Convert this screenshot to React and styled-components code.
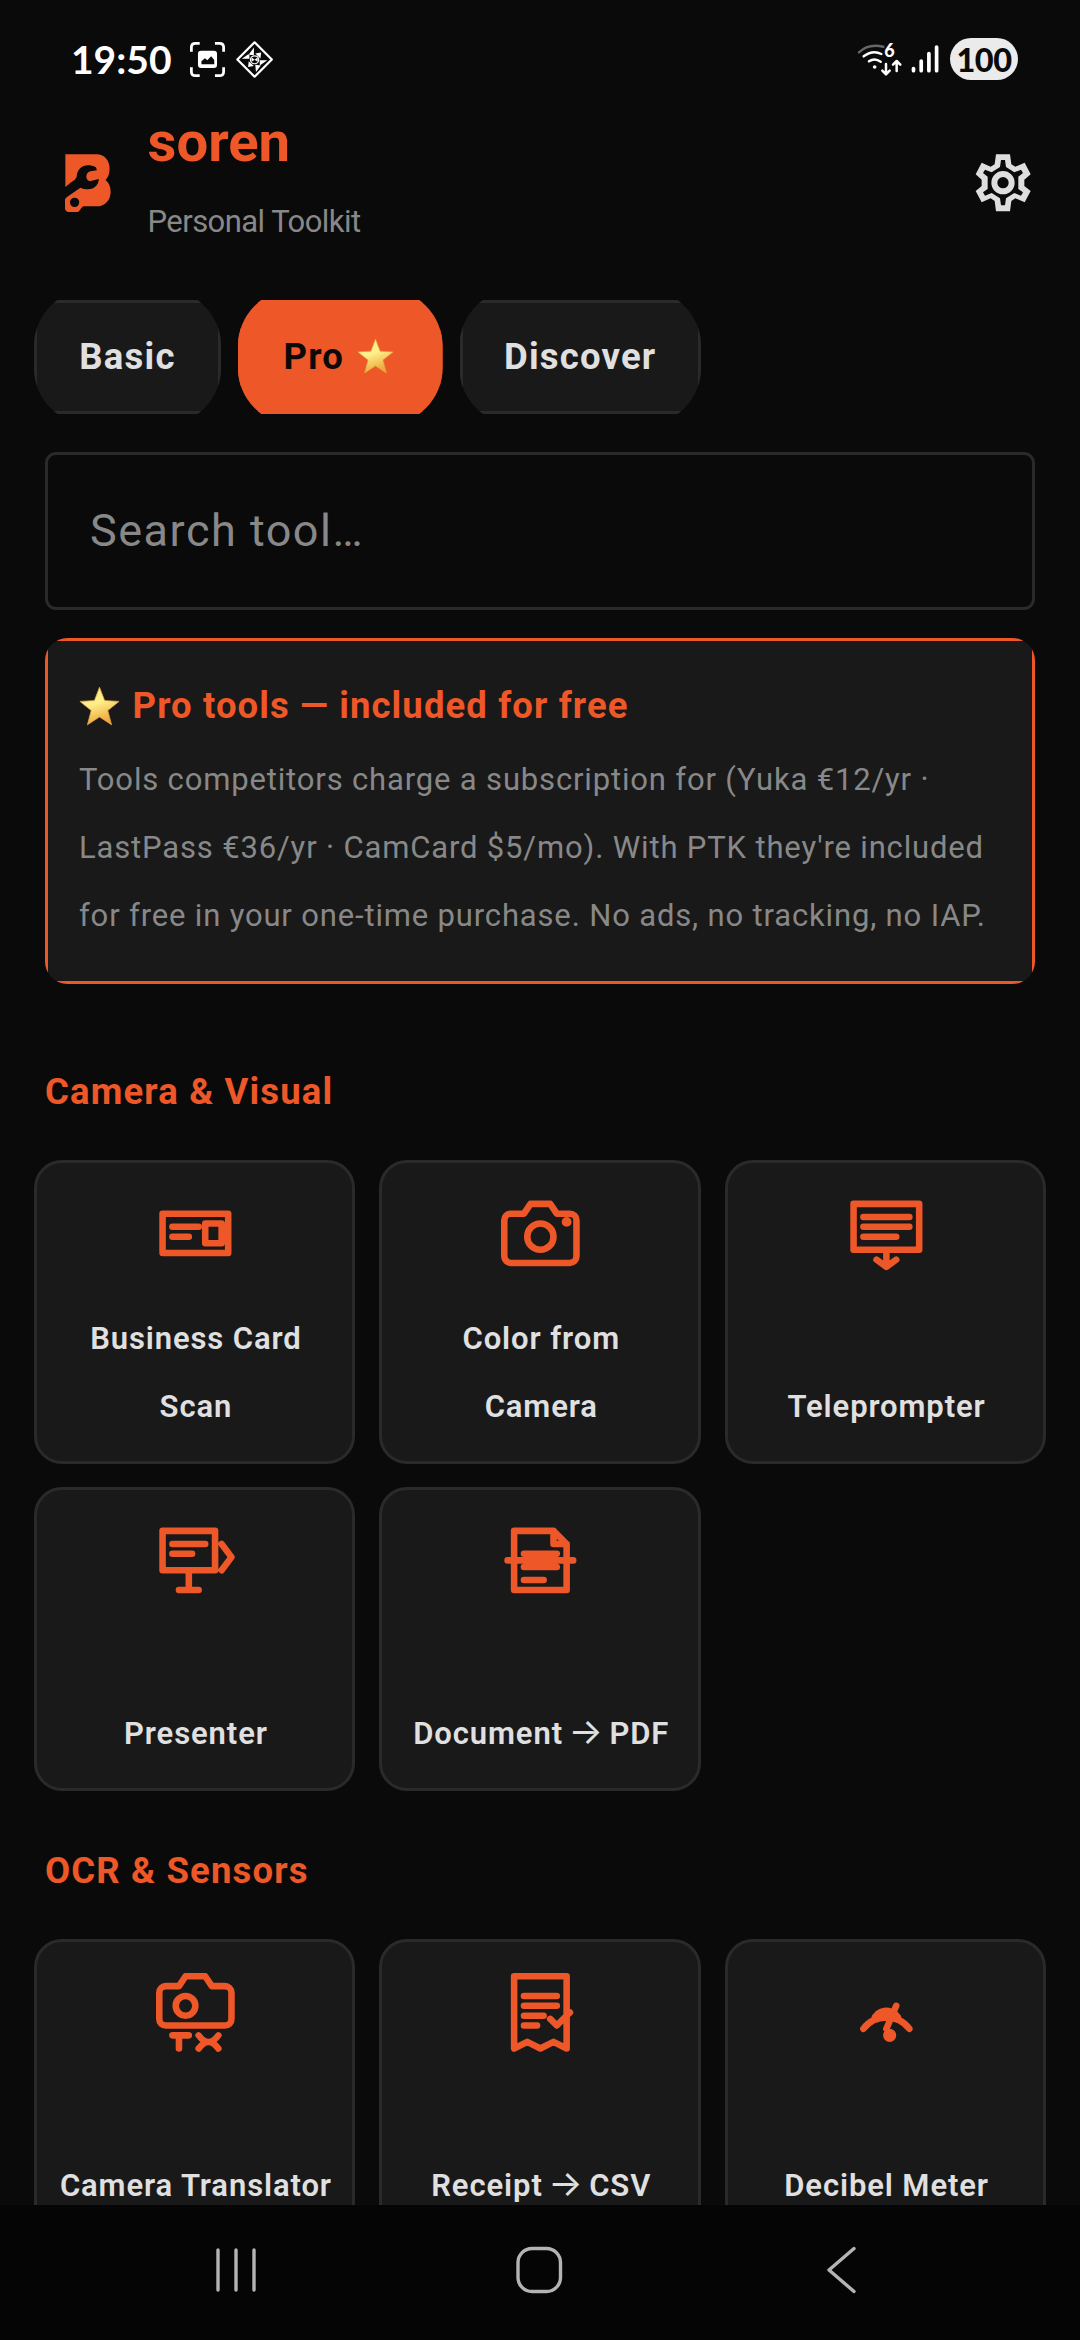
import React, { useState } from 'react'
import styled, { createGlobalStyle } from 'styled-components'

const GlobalStyle = createGlobalStyle`
  * {
    box-sizing: border-box;
  }
  body {
    margin: 0;
    background: #0a0a0a;
    font-family: Roboto, "Noto Sans", sans-serif;
  }
`

const Screen = styled.div`
  display: flex;
  flex-direction: column;
  width: 1080px;
  height: 2340px;
  overflow: hidden;
  background: #0a0a0a;
  color: #e0e0e0;
`

const StatusBar = styled.div`
  display: flex;
  flex: none;
  align-items: center;
  justify-content: space-between;
  height: 108px;
  padding: 10px 62px 0 71px;
`

const StatusGroup = styled.div`
  display: flex;
  align-items: center;
`

const Clock = styled.div`
  width: 119px;
  color: #fff;
  font-family: Lato, sans-serif;
  font-size: 39px;
  font-weight: 700;
  line-height: 48px;
  white-space: nowrap;
`

const Battery = styled.div`
  display: flex;
  align-items: center;
  justify-content: center;
  width: 68px;
  height: 42px;
  margin-left: 11px;
  border-radius: 21px;
  background: #ebebeb;
  color: #0a0a0a;
  font-family: Lato, sans-serif;
  font-size: 32.5px;
  font-weight: 900;
  letter-spacing: -0.5px;
`

const Header = styled.header`
  display: flex;
  flex: none;
  align-items: center;
  height: 148px;
  padding: 1px 49px 0 64.5px;
`

const Titles = styled.div`
  flex: 1;
  margin: -1px 0 0 37px;
`

const Title = styled.h1`
  margin: 0;
  color: #ee5728;
  font-size: 56.25px;
  font-weight: 700;
  line-height: 68px;
`

const Subtitle = styled.div`
  margin-top: 11.5px;
  color: #888;
  font-size: 31px;
  letter-spacing: -0.55px;
  line-height: 68px;
`

const Tabs = styled.nav`
  display: flex;
  flex: none;
  gap: 17px;
  margin-top: 44px;
  padding-left: 34px;
`

const Tab = styled.button`
  display: flex;
  align-items: center;
  justify-content: center;
  gap: 13px;
  width: ${({ $width }) => $width}px;
  height: 114px;
  padding: 0 ${({ $active }) => ($active ? 3 : 0)}px 2px 0;
  border: 3px solid ${({ $active }) => ($active ? '#ee5728' : '#2a2a2a')};
  background: ${({ $active }) => ($active ? '#ee5728' : '#191919')};
  color: ${({ $active }) => ($active ? '#0a0a0a' : '#e0e0e0')};
  clip-path: inset(-10.5px 0 round 56.25px);
  font-family: inherit;
  font-size: 36.5px;
  font-weight: 700;
  letter-spacing: 1.2px;
`

const Search = styled.input`
  flex: none;
  width: 990px;
  height: 158px;
  margin: 38px 45px 0;
  padding: 0 42px 2px;
  border: 3px solid #2a2a2a;
  border-radius: 11px;
  background: #0a0a0a;
  color: #e0e0e0;
  font-family: inherit;
  font-size: 45px;
  letter-spacing: 1.5px;
  outline: none;

  &::placeholder {
    color: #888;
    opacity: 1;
  }
`

const Banner = styled.section`
  flex: none;
  height: 346px;
  margin: 28px 45px 0;
  padding: 31px 31px 0;
  border: 3px solid #ee5728;
  background: #191919;
  clip-path: inset(0 round 22.5px);
`

const BannerTitle = styled.h2`
  display: flex;
  align-items: center;
  gap: 12.5px;
  margin: 0;
  color: #ee5728;
  font-size: 36.5px;
  font-weight: 700;
  letter-spacing: 1.1px;
  line-height: 68px;
`

const BannerText = styled.p`
  margin: 5.5px 0 0;
  color: #888;
  font-size: 31px;
  letter-spacing: 0.84px;
  line-height: 68px;
  white-space: nowrap;
`

const List = styled.main`
  flex: 1;
  min-height: 0;
  overflow: hidden;
  padding: 28px 34px 0;
`

const SectionTitle = styled.h2`
  margin: 45.5px 0 34.5px 11px;
  color: #ee5728;
  font-size: 36.5px;
  font-weight: 700;
  letter-spacing: 1.15px;
  line-height: 68px;
`

const Grid = styled.div`
  display: grid;
  grid-template-columns: repeat(3, 1fr);
  grid-auto-rows: 304px;
  gap: 23px 24px;
`

const Card = styled.div`
  display: flex;
  flex-direction: column;
  align-items: center;
  justify-content: space-between;
  padding: 31px 0 20.5px;
  border: 3px solid #2a2a2a;
  border-radius: 28px;
  background: #191919;
`

const CardIcon = styled.svg`
  flex: none;
  width: 78.75px;
  height: 78.75px;
  margin-left: 1.5px;
  fill: none;
  stroke: #ee5728;
  stroke-width: 2;
  stroke-linecap: round;
  stroke-linejoin: round;
`

const CardLabel = styled.div`
  display: flex;
  flex-direction: column;
  align-items: center;
  margin-left: 2.5px;
  font-size: 31px;
  font-weight: 600;
  letter-spacing: 0.9px;
  line-height: 67.8px;
  white-space: nowrap;
`

const Arrow = styled.span`
  margin: 0 -3px;
  font-family: Inter, sans-serif;
  font-size: 36px;
  font-weight: 400;
  line-height: 1;
`

const NavBar = styled.footer`
  display: flex;
  flex: none;
  align-items: center;
  justify-content: space-between;
  height: 135px;
  padding: 0 223px 6px 215px;
  background: #050505;
`

const NavIcon = styled.svg`
  fill: none;
  stroke: #b4b4b4;
  stroke-width: 3.4;
  stroke-linecap: round;
  stroke-linejoin: round;
`

const HomeIcon = styled(NavIcon)`
  margin-right: 6px;
`

const NotificationIcon = styled.svg`
  margin-left: 11px;
`

const Star = ({ size }) => (
  <svg width={size} height={size} viewBox="0 0 36 36">
    <defs>
      <linearGradient id="starFill" x1="0" y1="0" x2="0.35" y2="1">
        <stop offset="0" stopColor="#ffe680" />
        <stop offset="0.5" stopColor="#fdf08c" />
        <stop offset="1" stopColor="#f0a83c" />
      </linearGradient>
    </defs>
    <path
      d="M18 1l4.5 11.8 12.7.7-9.9 8 3.3 12.6L18 27.2 7.4 34.1l3.3-12.6-9.9-8 12.7-.7z"
      fill="url(#starFill)"
      stroke="#e0a040"
      strokeWidth=".7"
      strokeLinejoin="round"
    />
  </svg>
)

const ScreenshotIcon = () => (
  <svg width="35" height="35" viewBox="552 126 101 105" preserveAspectRatio="none">
    <path
      d="M556 155V142Q556 130 568 130H580M624 130H637Q649 130 649 142V155M649 202V215Q649 227 637 227H624M580 227H568Q556 227 556 215V202"
      fill="none"
      stroke="#fff"
      strokeWidth="8"
    />
    <rect x="575" y="152" width="55" height="52" rx="9" fill="#fff" />
    <path d="M585 193V184l10-9 7 6 11-12 9 11v13z" fill="#0a0a0a" />
  </svg>
)

const DiamondIcon = () => (
  <NotificationIcon width="37.2" height="37" viewBox="685 122 108 112" preserveAspectRatio="none">
    <path d="M739 126l50 52-50 52-50-52z" fill="none" stroke="#fff" strokeWidth="6.500" strokeLinejoin="round" />
    <path
      d="M737 142v22h-16zM741 160l17-3-2 18zM776 180h-22v16zM741 194l16 2-14 20zM737 198l-17 3 2-18zM702 176h22v-16z"
      fill="#fff"
    />
    <circle cx="739" cy="179" r="12" fill="none" stroke="#fff" strokeWidth="3.500" />
    <path d="M739 179l9-8v14zM739 179l-9-8v14z" fill="#fff" />
  </NotificationIcon>
)

const WifiSvg = styled.svg`
  overflow: visible;
`

const WifiIcon = () => (
  <WifiSvg width="47" height="35" viewBox="230 125 141 105" fill="none" stroke="#fff" strokeWidth="7.500" strokeLinecap="round" strokeLinejoin="round">
    <path d="M236 156Q264 128 309 139" stroke="#666" />
    <path d="M250 168Q277 148 303 161M266 183q17-12 35 1" />
    <circle cx="283" cy="200" r="5.500" fill="#fff" stroke="none" />
    <text x="312" y="171" fill="#fff" stroke="none" fontFamily="Lato" fontWeight="900" fontSize="54">6</text>
    <path d="M317 191v30M306 211l11 11 11-11M349 212v-29M338 193l11-11 11 11" />
  </WifiSvg>
)

const SignalSvg = styled.svg`
  margin-left: 7px;
`

const SignalIcon = () => (
  <SignalSvg width="28" height="30" viewBox="0 0 28 30" stroke="#fff" strokeWidth="3.700" strokeLinecap="round">
    <path d="M2.500 24.500v2.200M10.200 17v9.700M17.900 9.500v17.200M25.600 3v23.700" />
  </SignalSvg>
)

const Logo = () => (
  <svg width="46" height="58" viewBox="187 464 134 174" preserveAspectRatio="none" fill="#ee5728">
    <path d="M188 465H279C304 465 317 486 317 508C317 523 312 535 305 542C315 550 320 563 320 577C320 603 303 621 280 621H240L234 627A27 28 0 1 1 197 590L232 565C256 575 282 570 286 539L259 546C246 541 245 521 261 516L280 513L277 504C250 490 222 501 221 533Q217 543 205 549L188 563ZM215 595A13.500 14 0 1 0 215 623A13.500 14 0 1 0 215 595Z" fillRule="evenodd" />
  </svg>
)

const GearIcon = () => (
  <svg width="56" height="58" viewBox="582 460 168 174" fill="#dedede">
    <path
      fillRule="evenodd"
      d="M645 461H687L691 491L703 498L731 486L749 521L730 537V556L749 571L731 605L703 593L691 601L687 632H645L641 601L629 593L602 605L584 571L602 556V537L584 521L602 486L629 498L641 491ZM660 478L657 499L632 515L612 507L606 517L620 528V565L606 575L612 585L632 577L657 593L660 614H672L675 593L700 577L720 585L726 575L712 565V528L726 517L720 507L700 515L675 499L672 478Z"
    />
    <circle cx="666" cy="546" r="26" fill="none" stroke="#dedede" strokeWidth="18" />
  </svg>
)

const icons = {
  businessCard: <path d="M2 6h20v12H2zM5 10h8M5 13h5M15 9h5v6h-5z" />,
  colorCamera: (
    <>
      <path d="M23 19a2 2 0 0 1-2 2H3a2 2 0 0 1-2-2V8a2 2 0 0 1 2-2h4l2-3h6l2 3h4a2 2 0 0 1 2 2z" />
      <circle cx="12" cy="13" r="4" />
      <circle cx="20" cy="8.500" r="1.500" fill="#ee5728" stroke="none" />
    </>
  ),
  teleprompter: <path d="M2 3h20v14H2zM5 7h14M5 10h14M5 13h10M12 17v5M9 20l3 2.200 3-2.200" />,
  presenter: <path d="M2 3h16v12H2zM5 7h10M5 10h6M10 15v6M7 21h6M20 7l3 4-3 4" />,
  document: <path d="M4 3h12l4 4v14H4zM16 3v4h4M7 10h10M7 14h10M7 18h6M2 12h20" />,
  translator: (
    <>
      <path d="M23 14a2 2 0 0 1-2 2H3a2 2 0 0 1-2-2V6a2 2 0 0 1 2-2h4l2-3h6l2 3h4a2 2 0 0 1 2 2z" />
      <circle cx="9" cy="10" r="3" />
      <path d="M5 19h5M7 19v4M13 19q3 4 6 0M13 23q3-4 6 0" />
    </>
  ),
  receipt: <path d="M4 1h16v22l-4-2-4 2-4-2-4 2zM7 7h10M7 10h10M7 13h6M7 16h4M15 14l2 2 4-4" />,
  decibel: (
    <>
      <path d="M5 17a8.800 8.800 0 0 1 14 0M9.500 12.400a4 4 0 0 1 5 0M15 10l-3 7" />
      <path d="M8.500 13.400l1-1q2.500-1.200 5 0l1 1q-3.500-1-7 0z" fill="#ee5728" />
      <circle cx="13" cy="19" r="1" />
    </>
  ),
}

const tabs = [
  { name: 'Basic', width: 187 },
  { name: 'Pro', width: 204.5, star: true },
  { name: 'Discover', width: 241.5 },
]

const sections = [
  {
    title: 'Camera & Visual',
    tools: [
      { icon: 'businessCard', label: ['Business Card', 'Scan'] },
      { icon: 'colorCamera', label: ['Color from', 'Camera'] },
      { icon: 'teleprompter', label: ['Teleprompter'] },
      { icon: 'presenter', label: ['Presenter'] },
      { icon: 'document', label: [<>Document <Arrow>→</Arrow> PDF</>] },
    ],
  },
  {
    title: 'OCR & Sensors',
    tools: [
      { icon: 'translator', label: ['Camera Translator'] },
      { icon: 'receipt', label: [<>Receipt <Arrow>→</Arrow> CSV</>] },
      { icon: 'decibel', label: ['Decibel Meter'] },
    ],
  },
]

const App = () => {
  const [active, setActive] = useState('Pro')
  return (
    <Screen>
      <GlobalStyle />
      <StatusBar>
        <StatusGroup>
          <Clock>19:50</Clock>
          <ScreenshotIcon />
          <DiamondIcon />
        </StatusGroup>
        <StatusGroup>
          <WifiIcon />
          <SignalIcon />
          <Battery>100</Battery>
        </StatusGroup>
      </StatusBar>

      <Header>
        <Logo />
        <Titles>
          <Title>soren</Title>
          <Subtitle>Personal Toolkit</Subtitle>
        </Titles>
        <GearIcon />
      </Header>

      <Tabs>
        {tabs.map((tab) => (
          <Tab key={tab.name} $width={tab.width} $active={tab.name === active} onClick={() => setActive(tab.name)}>
            {tab.name}
            {tab.star && <Star size={37} />}
          </Tab>
        ))}
      </Tabs>

      <Search placeholder="Search tool…" />

      <Banner>
        <BannerTitle>
          <Star size={41} />
          Pro tools — included for free
        </BannerTitle>
        <BannerText>
          Tools competitors charge a subscription for (Yuka €12/yr ·<br />
          LastPass €36/yr · CamCard $5/mo). With PTK they're included<br />
          for free in your one-time purchase. No ads, no tracking, no IAP.
        </BannerText>
      </Banner>

      <List>
        {sections.map((section) => (
          <section key={section.title}>
            <SectionTitle>{section.title}</SectionTitle>
            <Grid>
              {section.tools.map((tool) => (
                <Card key={tool.icon}>
                  <CardIcon viewBox="0 0 24 24">{icons[tool.icon]}</CardIcon>
                  <CardLabel>
                    {tool.label.map((line, index) => (
                      <span key={index}>{line}</span>
                    ))}
                  </CardLabel>
                </Card>
              ))}
            </Grid>
          </section>
        ))}
      </List>

      <NavBar>
        <NavIcon width="42" height="48" viewBox="0 0 42 48">
          <path d="M3 4v40M21 4v40M39 4v40" />
        </NavIcon>
        <HomeIcon width="48" height="48" viewBox="0 0 48 48">
          <rect x="3" y="2.500" width="42.500" height="43" rx="14" />
        </HomeIcon>
        <NavIcon width="31" height="48" viewBox="0 0 31 48">
          <path d="M28 2.500L3 24l25 21.500" />
        </NavIcon>
      </NavBar>
    </Screen>
  )
}

export default App
